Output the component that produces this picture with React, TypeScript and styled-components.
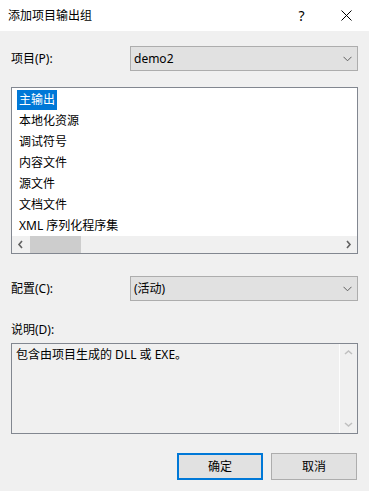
import React from "react";
import styled, { createGlobalStyle } from "styled-components";

const Global = createGlobalStyle`
  html, body { margin: 0; padding: 0; background: #f0f0f0; }
  * { box-sizing: border-box; }
`;

const FONT = `"Segoe UI", "Noto Sans", "Noto Sans CJK SC", sans-serif`;

const Window = styled.div`
  width: 369px;
  height: 491px;
  background: #f0f0f0;
  font-family: ${FONT};
  font-size: 12px;
  color: #000;
  display: flex;
  flex-direction: column;
  overflow: hidden;
`;

const TitleBar = styled.div`
  height: 31px;
  background: #fff;
  display: flex;
  align-items: center;
  justify-content: space-between;
  padding-left: 8px;
`;

const Title = styled.div`
  font-size: 12px;
  line-height: 16px;
`;

const TitleButtons = styled.div`
  display: flex;
  align-items: center;
  height: 100%;
`;

const TitleButton = styled.div`
  width: 45px;
  height: 100%;
  display: flex;
  align-items: center;
  justify-content: center;
  font-size: 14px;
`;

const Body = styled.div`
  flex: 1;
  display: flex;
  flex-direction: column;
  padding: 15px 11px 0 11px;
`;

const FieldRow = styled.div<{ $top?: number }>`
  display: flex;
  align-items: center;
  margin-top: ${(p) => p.$top ?? 0}px;
`;

const Label = styled.div`
  width: 119px;
  line-height: 16px;
  padding-left: 0;
`;

const Combo = styled.div`
  flex: 1;
  height: 25px;
  background: #e1e1e1;
  border: 1px solid #adadad;
  display: flex;
  align-items: center;
  justify-content: space-between;
  padding: 0 5px 0 3px;
  line-height: 16px;
`;

const ListBox = styled.div`
  margin-top: 16px;
  height: 167px;
  background: #fff;
  border: 1px solid #828790;
  display: flex;
  flex-direction: column;
`;

const ListItems = styled.div`
  flex: 1;
  padding: 1px 0 0 5px;
  display: flex;
  flex-direction: column;
`;

const ListItem = styled.div<{ $selected?: boolean }>`
  height: 21px;
  display: flex;
  align-items: center;
`;

const ItemText = styled.span<{ $selected?: boolean }>`
  padding: 2px 2px;
  line-height: 16px;
  background: ${(p) => (p.$selected ? "#0078d7" : "transparent")};
  color: ${(p) => (p.$selected ? "#fff" : "#000")};
`;

const HScroll = styled.div`
  height: 17px;
  background: #f0f0f0;
  display: flex;
  align-items: center;
`;

const ScrollArrow = styled.div`
  width: 17px;
  height: 17px;
  display: flex;
  align-items: center;
  justify-content: center;
`;

const HTrack = styled.div`
  flex: 1;
  height: 100%;
  display: flex;
  align-items: center;
`;

const HThumb = styled.div`
  width: 51px;
  height: 100%;
  background: #cdcdcd;
  margin-left: 1px;
`;

const DescLabel = styled.div`
  margin-top: 21px;
  line-height: 16px;
`;

const DescBox = styled.div`
  margin-top: 5px;
  height: 91px;
  border: 1px solid #828790;
  background: #f0f0f0;
  display: flex;
`;

const DescText = styled.div`
  flex: 1;
  padding: 3px 4px;
  line-height: 16px;
`;

const VScroll = styled.div`
  width: 18px;
  border-left: 1px solid #fdfdfd;
  display: flex;
  flex-direction: column;
  justify-content: space-between;
`;

const ButtonRow = styled.div`
  margin-top: 19px;
  display: flex;
  justify-content: flex-end;
  gap: 8px;
  padding-right: 1px;
`;

const Button = styled.div<{ $default?: boolean }>`
  width: 86px;
  height: 27px;
  background: #e1e1e1;
  border: ${(p) => (p.$default ? "2px solid #0078d7" : "1px solid #adadad")};
  display: flex;
  align-items: center;
  justify-content: center;
  line-height: 16px;
`;

const Chevron = () => (
  <svg width="9" height="6" viewBox="0 0 9 6">
    <polyline points="0.5,0.8 4.5,4.8 8.5,0.8" fill="none" stroke="#606060" strokeWidth="1" />
  </svg>
);

const Arrow = ({ dir, color }: { dir: "left" | "right" | "up" | "down"; color: string }) => {
  const pts: Record<string, string> = {
    left: "5,1 2,4.5 5,8",
    right: "2,1 5,4.5 2,8",
    up: "1,5 4.5,2 8,5",
    down: "1,2 4.5,5 8,2",
  };
  const w = dir === "left" || dir === "right" ? 7 : 9;
  const h = dir === "left" || dir === "right" ? 9 : 7;
  return (
    <svg width={w} height={h} viewBox={`0 0 ${w} ${h}`}>
      <polyline points={pts[dir]} fill="none" stroke={color} strokeWidth="1.6" />
    </svg>
  );
};

const items = ["主输出", "本地化资源", "调试符号", "内容文件", "源文件", "文档文件", "XML 序列化程序集"];

export default function App() {
  return (
    <>
      <Global />
      <Window>
        <TitleBar>
          <Title>添加项目输出组</Title>
          <TitleButtons>
            <TitleButton>?</TitleButton>
            <TitleButton>
              <svg width="11" height="11" viewBox="0 0 11 11">
                <path d="M0.5 0.5 L10.5 10.5 M10.5 0.5 L0.5 10.5" stroke="#000" strokeWidth="1" />
              </svg>
            </TitleButton>
          </TitleButtons>
        </TitleBar>
        <Body>
          <FieldRow>
            <Label>项目(P):</Label>
            <Combo>
              <span>demo2</span>
              <Chevron />
            </Combo>
          </FieldRow>
          <ListBox>
            <ListItems>
              {items.map((t, i) => (
                <ListItem key={t}>
                  <ItemText $selected={i === 0}>{t}</ItemText>
                </ListItem>
              ))}
            </ListItems>
            <HScroll>
              <ScrollArrow>
                <Arrow dir="left" color="#606060" />
              </ScrollArrow>
              <HTrack>
                <HThumb />
              </HTrack>
              <ScrollArrow>
                <Arrow dir="right" color="#606060" />
              </ScrollArrow>
            </HScroll>
          </ListBox>
          <FieldRow $top={22}>
            <Label>配置(C):</Label>
            <Combo>
              <span>(活动)</span>
              <Chevron />
            </Combo>
          </FieldRow>
          <DescLabel>说明(D):</DescLabel>
          <DescBox>
            <DescText>包含由项目生成的 DLL 或 EXE。</DescText>
            <VScroll>
              <ScrollArrow>
                <Arrow dir="up" color="#c0c0c0" />
              </ScrollArrow>
              <ScrollArrow>
                <Arrow dir="down" color="#c0c0c0" />
              </ScrollArrow>
            </VScroll>
          </DescBox>
          <ButtonRow>
            <Button $default>确定</Button>
            <Button>取消</Button>
          </ButtonRow>
        </Body>
      </Window>
    </>
  );
}
